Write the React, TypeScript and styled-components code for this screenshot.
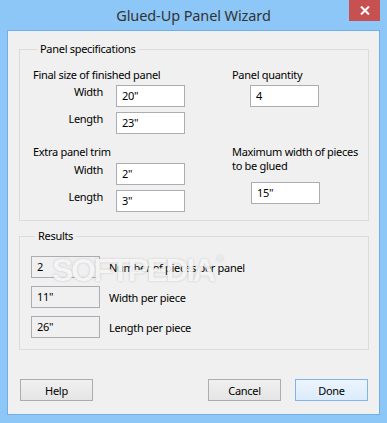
import React from "react";
import styled, { createGlobalStyle } from "styled-components";

const GlobalStyle = createGlobalStyle`
  html, body {
    margin: 0;
    padding: 0;
    background: #ffffff;
  }
  body {
    font-family: "Noto Sans", "DejaVu Sans", sans-serif;
  }
`;

const FONT = `"Noto Sans", "DejaVu Sans", sans-serif`;

const Window = styled.div`
  position: relative;
  width: 387px;
  height: 423px;
  box-sizing: border-box;
  background: #8cc7f7;
  display: flex;
  flex-direction: column;
  font-family: ${FONT};
  font-size: 11px;
  letter-spacing: -0.3px;
  color: #000;
`;

const TitleBar = styled.div`
  height: 30px;
  position: relative;
  display: flex;
  align-items: center;
  justify-content: center;
`;

const Title = styled.div`
  font-size: 14.5px;
  color: #333;
  letter-spacing: -0.1px;
`;

const CloseButton = styled.div`
  position: absolute;
  top: 0;
  right: 7px;
  width: 31px;
  height: 21px;
  background: #c75050;
  display: flex;
  align-items: center;
  justify-content: center;
`;

const Client = styled.div`
  margin: 0 7px 0 7px;
  height: 385px;
  box-sizing: border-box;
  border: 1px solid #72ade3;
  background: #f0f0f0;
  padding: 10px 10px 0 11px;
  display: flex;
  flex-direction: column;
`;

const Group = styled.fieldset<{ $pt: number; $pb: number; $pl: number; $mt?: number }>`
  margin: ${(p) => p.$mt ?? 0}px 0 0 0;
  min-width: 0;
  border: 1px solid #dcdcdc;
  padding: ${(p) => p.$pt}px 0 ${(p) => p.$pb}px ${(p) => p.$pl}px;
`;

const Legend = styled.legend`
  margin-left: 4px;
  padding: 0 3px;
  line-height: 16px;
`;

const SpecGrid = styled.div`
  display: grid;
  grid-template-columns: 199px 1fr;
`;

const Column = styled.div`
  display: flex;
  flex-direction: column;
  align-items: flex-start;
`;

const Heading = styled.div<{ $mt?: number }>`
  line-height: 16px;
  white-space: nowrap;
  margin-top: ${(p) => p.$mt ?? 0}px;
`;

const Wrapped = styled.div<{ $mt: number }>`
  line-height: 14px;
  white-space: nowrap;
  margin-top: ${(p) => p.$mt}px;
`;

const FieldRow = styled.div<{ $mt: number }>`
  display: flex;
  align-items: flex-start;
  margin-top: ${(p) => p.$mt}px;
`;

const FieldLabel = styled.div`
  width: 70px;
  text-align: right;
  margin-right: 13px;
  line-height: 16px;
  margin-top: -1px;
`;

const Input = styled.div<{ $mt?: number; $ml?: number }>`
  width: 69px;
  height: 22px;
  box-sizing: border-box;
  border: 1px solid #abadb3;
  background: #ffffff;
  padding: 0 0 0 5px;
  line-height: 20px;
  margin-top: ${(p) => p.$mt ?? 0}px;
  margin-left: ${(p) => p.$ml ?? 0}px;
`;

const ResultList = styled.div`
  display: flex;
  flex-direction: column;
  gap: 8px;
`;

const ResultRow = styled.div`
  display: flex;
  align-items: center;
  gap: 9px;
`;

const ResultBox = styled.div`
  width: 69px;
  height: 22px;
  box-sizing: border-box;
  border: 1px solid #abadb3;
  background: #f0f0f0;
  padding-left: 5px;
  line-height: 20px;
`;

const ButtonBar = styled.div`
  display: flex;
  gap: 14px;
  margin-top: 29px;
  padding-left: 1px;
  padding-right: 1px;
`;

const Button = styled.div<{ $primary?: boolean }>`
  width: 73px;
  height: 22px;
  box-sizing: border-box;
  border: 1px solid ${(p) => (p.$primary ? "#7eb4ea" : "#adadad")};
  background: ${(p) =>
    p.$primary
      ? "linear-gradient(#ebf4fc, #dcecfc)"
      : "linear-gradient(#f0f0f0, #e5e5e5)"};
  display: flex;
  align-items: center;
  justify-content: center;
`;

const Spacer = styled.div`
  flex: 1;
`;

const Watermark = styled.div`
  position: absolute;
  left: 52px;
  top: 252px;
  font-family: "Liberation Sans", Arial, sans-serif;
  font-weight: bold;
  font-size: 32px;
  letter-spacing: -2.4px;
  color: rgba(255, 255, 255, 0.85);
  text-shadow: 0 0 1px rgba(120, 120, 120, 0.35), 0 0 3px rgba(150, 150, 150, 0.25);
  pointer-events: none;
  & sup {
    font-size: 9px;
    vertical-align: top;
    position: relative;
    top: 2px;
    margin-left: 3px;
  }
`;

const results = [
  { value: "2", label: "Number of pieces per panel" },
  { value: "11\"", label: "Width per piece" },
  { value: "26\"", label: "Length per piece" },
];

export default function App() {
  return (
    <Window>
      <GlobalStyle />
      <TitleBar>
        <Title>Glued-Up Panel Wizard</Title>
        <CloseButton>
          <svg width="10" height="9" viewBox="0 0 10 9">
            <path
              d="M1 0.5 L9 8.5 M9 0.5 L1 8.5"
              stroke="#ffffff"
              strokeWidth="2"
            />
          </svg>
        </CloseButton>
      </TitleBar>
      <Client>
        <Group $pt={10} $pb={8} $pl={13}>
          <Legend>Panel specifications</Legend>
          <SpecGrid>
            <Column>
              <Heading>Final size of finished panel</Heading>
              <FieldRow $mt={2}>
                <FieldLabel>Width</FieldLabel>
                <Input>20"</Input>
              </FieldRow>
              <FieldRow $mt={5}>
                <FieldLabel>Length</FieldLabel>
                <Input>23"</Input>
              </FieldRow>
              <Heading $mt={10}>Extra panel trim</Heading>
              <FieldRow $mt={3}>
                <FieldLabel>Width</FieldLabel>
                <Input>2"</Input>
              </FieldRow>
              <FieldRow $mt={5}>
                <FieldLabel>Length</FieldLabel>
                <Input>3"</Input>
              </FieldRow>
            </Column>
            <Column>
              <Heading>Panel quantity</Heading>
              <Input $mt={2} $ml={18}>
                4
              </Input>
              <Wrapped $mt={38}>
                Maximum width of pieces
                <br />
                to be glued
              </Wrapped>
              <Input $mt={9} $ml={19}>
                15"
              </Input>
            </Column>
          </SpecGrid>
        </Group>
        <Group $pt={12} $pb={11} $pl={11} $mt={7}>
          <Legend>Results</Legend>
          <ResultList>
            {results.map((r) => (
              <ResultRow key={r.label}>
                <ResultBox>{r.value}</ResultBox>
                <span>{r.label}</span>
              </ResultRow>
            ))}
          </ResultList>
        </Group>
        <ButtonBar>
          <Button>Help</Button>
          <Spacer />
          <Button>Cancel</Button>
          <Button $primary>Done</Button>
        </ButtonBar>
      </Client>
      <Watermark>
        SOFTPEDIA<sup>®</sup>
      </Watermark>
    </Window>
  );
}
